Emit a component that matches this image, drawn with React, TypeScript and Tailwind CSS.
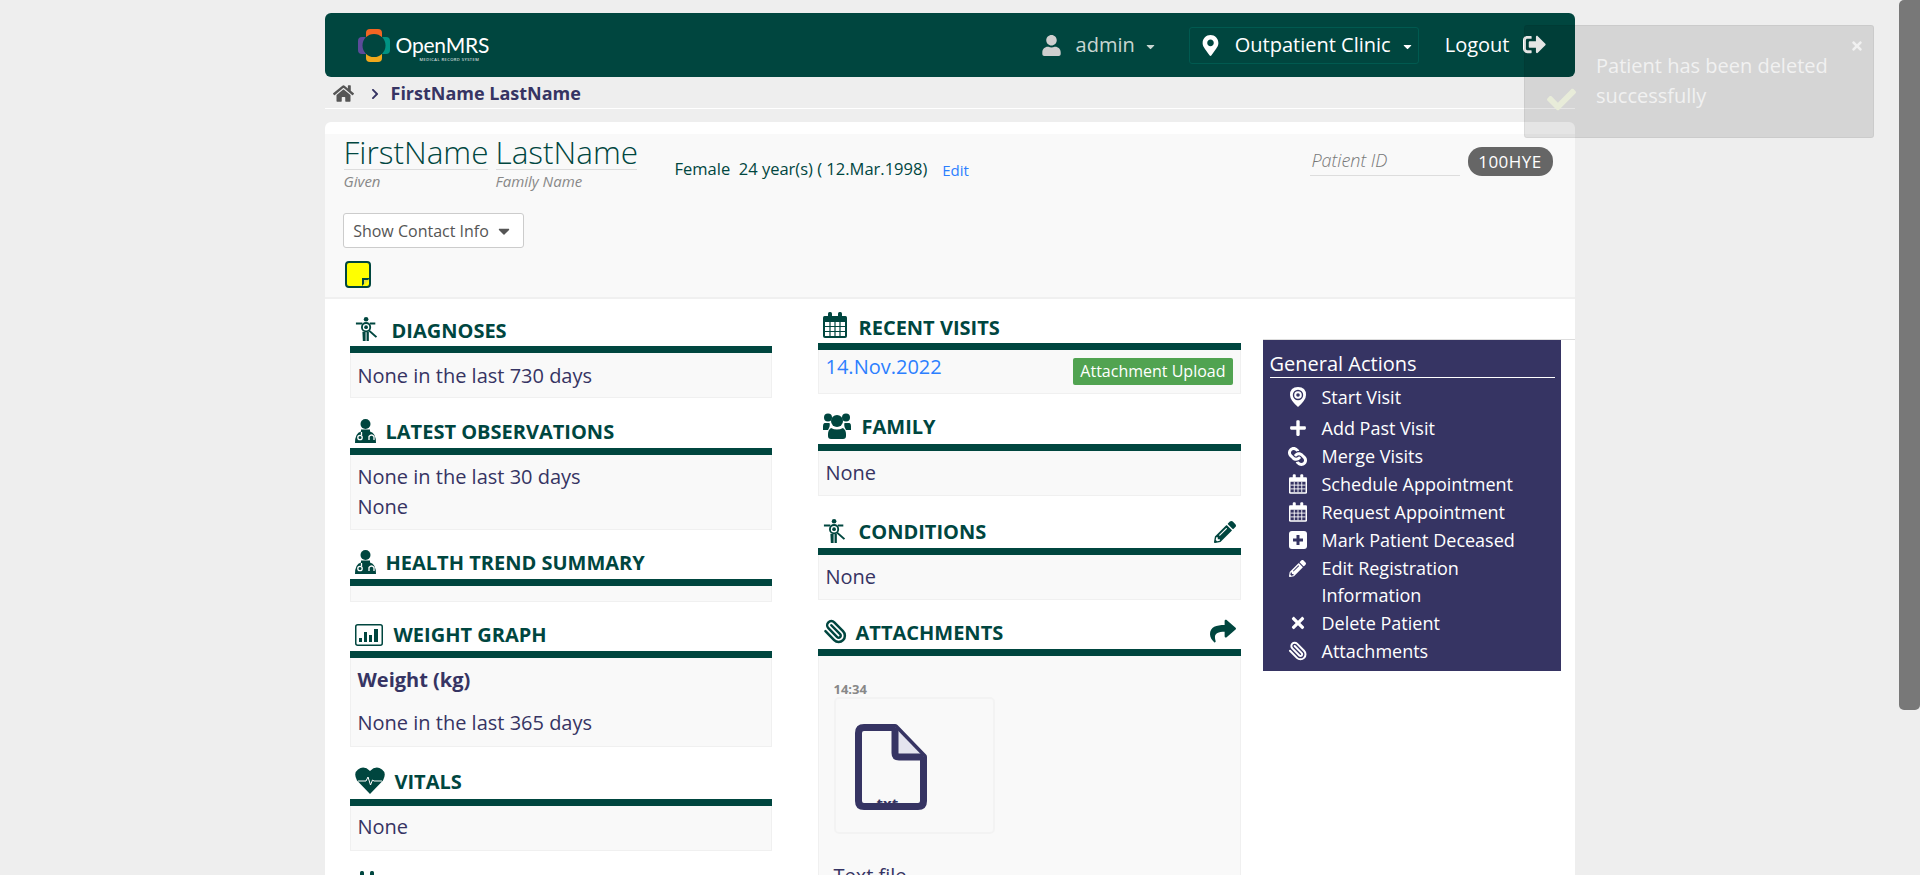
import type { ReactNode } from 'react'
import {
  FaCaretDown, FaCheck, FaChevronRight, FaHome, FaLink, FaMapMarkerAlt,
  FaPencilAlt, FaPlus, FaShare, FaSignOutAlt, FaTimes, FaUser,
} from 'react-icons/fa'
import { Paperclip } from 'lucide-react'

// ─── Drawn icons ─────────────────────────────────────────────

function Logo() {
  return (
    <svg width="32" height="33" viewBox="0 0 32 33" className="shrink-0">
      <rect x="8" y="0" width="16" height="14" rx="4" fill="#f26522" />
      <rect x="8" y="19" width="16" height="14" rx="4" fill="#f0a81c" />
      <rect x="0" y="8" width="14" height="17" rx="4" fill="#5b4b9a" />
      <rect x="18" y="8" width="14" height="17" rx="4" fill="#009384" />
      <circle cx="16" cy="16.5" r="11.5" fill="#00463f" />
    </svg>
  )
}

function BodyIcon({ size = 24 }: { size?: number }) {
  return (
    <svg width={size} height={size} viewBox="0 0 24 26" fill="#00463f">
      <circle cx="11" cy="2.5" r="2.5" />
      <path d="M0 6 H7 V8 H0 Z M15 6 H21 V8 H15 Z" />
      <circle cx="11" cy="11" r="4.5" fill="none" stroke="#00463f" strokeWidth="2" />
      <circle cx="11" cy="11" r="2" />
      <path d="M15 14 L23 21 L21.5 22.5 L13.5 15.5 Z" />
      <path d="M7 16 H10.5 V26 H7.5 Z M11.5 16 H14 V26 H11.5 Z" />
    </svg>
  )
}

function DoctorIcon() {
  return (
    <svg width="21" height="24" viewBox="0 0 21 24" fill="#00463f">
      <circle cx="10.5" cy="5" r="5" />
      <path d="M6 10.5 H15 V12.5 Q21 14 21 24 H0 Q0 14 6 12.5 Z" />
      <circle cx="5" cy="18.5" r="2.2" fill="none" stroke="#fff" strokeWidth="1.3" />
      <path d="M6.5 13 V16 M14 21 V17.5 Q16.5 14.5 19 17.5 V21" fill="none" stroke="#fff" strokeWidth="1.3" />
    </svg>
  )
}

function ChartIcon() {
  return (
    <svg width="28" height="22" viewBox="0 0 28 22">
      <rect x="0.75" y="0.75" width="26.5" height="20.5" rx="2" fill="none" stroke="#00463f" strokeWidth="1.5" />
      <path d="M4 14 H7 V18 H4 Z M9 8 H12 V18 H9 Z M14 11 H17 V18 H14 Z M19 5 H23 V18 H19 Z" fill="#00463f" />
    </svg>
  )
}

function HeartIcon() {
  return (
    <svg width="30" height="27" viewBox="0 0 30 27">
      <path d="M15 27 L2 13.5 Q-2 6 3 2.5 Q9 -2 15 4 Q21 -2 27 2.5 Q32 6 28 13.5 Z" fill="#00463f" />
      <path d="M3 14 H11 L13 10 L15.5 18 L17.5 13 L19 14 H27" fill="none" stroke="#fff" strokeWidth="1" />
    </svg>
  )
}

function UsersIcon() {
  return (
    <svg width="28" height="26" viewBox="0 0 28 26" fill="#00463f">
      <circle cx="5" cy="4.5" r="4" />
      <circle cx="23" cy="4.5" r="4" />
      <circle cx="14" cy="8" r="6" />
      <path d="M1.5 10 H6.5 Q7.5 13 5 17 H0 V13 Q0 10.5 1.5 10 Z" />
      <path d="M21.5 10 H26.5 Q28 10.5 28 13 V17 H23 Q20.5 13 21.5 10 Z" />
      <path d="M8 15 Q14 18 20 15 Q23 17 23 21 V23 Q23 26 20 26 H8 Q5 26 5 23 V21 Q5 17 8 15 Z" />
    </svg>
  )
}

function CalendarIcon({ size = 24, color = '#00463f', inner = '#fff' }: { size?: number; color?: string; inner?: string }) {
  return (
    <svg width={size} height={size + 2} viewBox="0 0 24 26" fill={color}>
      <path d="M1.5 4 H22.5 Q24 4 24 5.5 V24 Q24 26 22 26 H2 Q0 26 0 24 V5.5 Q0 4 1.5 4 Z" />
      <rect x="5" y="0" width="4" height="7" rx="1.5" />
      <rect x="15" y="0" width="4" height="7" rx="1.5" />
      <path d="M2 10 H22 V24 H2 Z" fill={inner} />
      <path d="M7 10 V24 M12 10 V24 M17 10 V24 M2 14.5 H22 M2 19.5 H22" stroke={color} strokeWidth="1.2" />
    </svg>
  )
}

function StartVisitIcon() {
  return (
    <svg width="16" height="20" viewBox="0 0 16 20">
      <path d="M8 0 Q16 0 16 8 Q16 13 8 20 Q0 13 0 8 Q0 0 8 0 Z" fill="#fff" />
      <circle cx="8" cy="8" r="4.5" fill="none" stroke="#363463" strokeWidth="1.4" />
      <circle cx="8" cy="8" r="1.8" fill="#363463" />
    </svg>
  )
}

function PlusBoxIcon() {
  return (
    <svg width="18" height="18" viewBox="0 0 18 18">
      <rect width="18" height="18" rx="3" fill="#fff" />
      <path d="M7.5 4 H10.5 V7.5 H14 V10.5 H10.5 V14 H7.5 V10.5 H4 V7.5 H7.5 Z" fill="#363463" />
    </svg>
  )
}

function StickyIcon() {
  return (
    <svg width="26" height="27" viewBox="0 0 26 27">
      <rect x="1" y="1" width="24" height="25" rx="3" fill="#ff0" stroke="#00463f" strokeWidth="2" />
      <path d="M17 25 V17 H25 Z" fill="#00463f" />
      <path d="M19 24 V19 H24 Z" fill="#e0e040" />
    </svg>
  )
}

function FileIcon() {
  return (
    <div className="relative w-[72px] h-[86px]">
      <svg width="72" height="86" viewBox="0 0 72 86">
        <path
          d="M9 3.5 H40 L68.5 33 V77 Q68.5 82.5 63 82.5 H9 Q3.5 82.5 3.5 77 V9 Q3.5 3.5 9 3.5 Z"
          fill="none" stroke="#363463" strokeWidth="7" strokeLinejoin="round"
        />
        <path d="M40 3.5 V29 Q40 33 44 33 H68.5" fill="#e4e4ee" stroke="#363463" strokeWidth="7" strokeLinejoin="round" />
      </svg>
      <span className="absolute left-[22px] top-[71px] text-[15px] leading-[16px] font-bold text-[#363463]">txt</span>
    </div>
  )
}

// ─── Dashboard section ───────────────────────────────────────

interface SectionProps {
  icon: ReactNode
  title: string
  action?: ReactNode
  head: string
  gap: string
  children?: ReactNode
}

function Section({ icon, title, action, head, gap, children }: SectionProps) {
  return (
    <section>
      <div className={`flex items-end pl-[5px] pr-[5px] pb-[5px] ${head}`}>
        <span className="flex items-end shrink-0">{icon}</span>
        <h2 className={`${gap} text-[20px] leading-[25px] font-bold uppercase text-[#00463f]`}>{title}</h2>
        {action && <span className="ml-auto">{action}</span>}
      </div>
      <div className="h-[7px] bg-[#00463f]" />
      {children && (
        <div className="bg-[#f9f9f9] border border-t-0 border-[#f0f0f0] px-[7px] text-[20px] leading-[30px] text-[#363463]">
          {children}
        </div>
      )}
    </section>
  )
}

const ACTIONS = [
  { label: 'Start Visit', icon: <StartVisitIcon />, row: 'h-[30px]' },
  { label: 'Add Past Visit', icon: <FaPlus size={18} />, row: 'h-[28px] mt-[2px]' },
  { label: 'Merge Visits', icon: <FaLink size={19} className="rotate-90" />, row: 'h-[28px]' },
  { label: 'Schedule Appointment', icon: <CalendarIcon size={18} color="#fff" inner="#363463" />, row: 'h-[28px]' },
  { label: 'Request Appointment', icon: <CalendarIcon size={18} color="#fff" inner="#363463" />, row: 'h-[28px]' },
  { label: 'Mark Patient Deceased', icon: <PlusBoxIcon />, row: 'h-[28px]' },
  { label: 'Edit Registration', icon: <FaPencilAlt size={17} />, row: 'h-[28px]' },
  { label: 'Information', icon: null, row: 'h-[27px]' },
  { label: 'Delete Patient', icon: <FaTimes size={18} />, row: 'h-[28px]' },
  { label: 'Attachments', icon: <Paperclip size={20} strokeWidth={2.4} className="-scale-x-100" />, row: 'h-[28px]' },
]

// ─── Page ────────────────────────────────────────────────────

export default function App() {
  return (
    <div className="relative h-[875px] overflow-hidden bg-[#eeeeee] pr-[21px] font-['Open_Sans',sans-serif]">
      <div className="w-[1250px] mx-auto pt-[13px]">
        {/* Top bar */}
        <header className="h-[64px] bg-[#00463f] rounded-[6px] flex items-center pl-[33px] pr-[29px] text-white">
          <Logo />
          <div className="ml-[6px] relative">
            <div className="font-['Lato',sans-serif] text-[21px] leading-[30px] -tracking-[0.2px]">OpenMRS</div>
            <div className="absolute left-[24px] top-[27px] text-[4px] leading-[6px] tracking-[0.5px] whitespace-nowrap">
              MEDICAL RECORD SYSTEM
            </div>
          </div>
          <FaUser size={21} className="ml-auto text-[#cfcfcf]" />
          <span className="ml-[14px] text-[20px] text-[#c8d6d2]">admin</span>
          <FaCaretDown size={13} className="ml-[9px] mt-[3px] text-[#c8d6d2]" />
          <div className="ml-[32px] w-[230px] h-[37px] border border-[#005a50] rounded-[3px] flex items-center pl-[10px]">
            <FaMapMarkerAlt size={21} />
            <span className="ml-[14px] text-[20px] whitespace-nowrap">Outpatient Clinic</span>
            <FaCaretDown size={13} className="ml-[10px] mt-[3px]" />
          </div>
          <span className="ml-[26px] text-[20px]">Logout</span>
          <FaSignOutAlt size={23} className="ml-[13px] -mt-[2px]" />
        </header>

        {/* Breadcrumb */}
        <nav className="h-[32px] border-b border-white flex items-center pl-[8px] pt-[1px] text-[#363463]">
          <FaHome size={21} className="text-[#555555]" />
          <FaChevronRight size={12} className="ml-[15px] mt-[2px]" />
          <span className="ml-[10px] text-[18px] font-bold">FirstName LastName</span>
        </nav>

        {/* Patient card */}
        <main className="mt-[13px] bg-white rounded-t-[6px] pt-[12px] min-h-[800px]">
          <div className="h-[165px] bg-[#f9f9f9] border-b-2 border-[#f0f0f0] pl-[18px] pr-[22px]">
            <div className="flex items-start">
              <div className="w-[145px] mt-[1px] pl-[1px]">
                <div className="text-[31.5px] leading-[34px] text-[#00463f] border-b border-[#dddddd] font-light whitespace-nowrap">FirstName</div>
                <div className="text-[15px] leading-[22px] italic text-[#888888]">Given</div>
              </div>
              <div className="ml-[7px] w-[142px] mt-[1px] pl-[1px]">
                <div className="text-[31.5px] leading-[34px] text-[#00463f] border-b border-[#dddddd] font-light whitespace-nowrap">LastName</div>
                <div className="text-[15px] leading-[22px] italic text-[#888888]">Family Name</div>
              </div>
              <div className="ml-[38px] mt-[23px] text-[16.5px] leading-[24px] text-[#00463f] whitespace-pre">Female  24 year(s) ( 12.Mar.1998)</div>
              <a className="ml-[15px] mt-[24px] text-[15px] leading-[24px] text-[#2c7fff]">Edit</a>
              <div className="ml-auto mt-[13px] w-[150px] h-[29px] pl-[2px] border-b border-[#dddddd] text-[18px] leading-[26px] italic font-light text-[#777777]">Patient ID</div>
              <span className="ml-[8px] mt-[13px] w-[85px] h-[29px] rounded-[14px] bg-[#666666] text-white text-[17px] leading-[29px] text-center tracking-[0.5px]">100HYE</span>
            </div>
            <button className="mt-[21px] w-[181px] h-[35px] bg-white border border-[#cccccc] rounded-[3px] flex items-center justify-center gap-[6px] text-[16px] text-[#555555]">
              Show Contact Info
              <FaCaretDown size={18} />
            </button>
            <div className="mt-[13px] ml-[2px]"><StickyIcon /></div>
          </div>

          <div className="flex pl-[25px]">
            {/* Left column */}
            <div className="w-[422px]">
              <Section icon={<BodyIcon />} title="Diagnoses" gap="ml-[13px] -mb-[2px]" head="h-[47px]">
                <div className="h-[44px] pt-[8px]">None in the last 730 days</div>
              </Section>
              <Section icon={<DoctorIcon />} title="Latest Observations" gap="ml-[10px] -mb-[1px]" head="h-[50px]">
                <div className="h-[74px] pt-[7px]">
                  <div>None in the last 30 days</div>
                  <div>None</div>
                </div>
              </Section>
              <Section icon={<DoctorIcon />} title="Health Trend Summary" gap="ml-[10px] -mb-[1px]" head="h-[49px]">
                <div className="h-[15px]" />
              </Section>
              <Section icon={<ChartIcon />} title="Weight Graph" gap="ml-[11px] -mb-[1px]" head="h-[49px]">
                <div className="h-[88px]">
                  <div className="pt-[7px] font-bold">Weight (kg)</div>
                  <div className="pt-[13px]">None in the last 365 days</div>
                </div>
              </Section>
              <Section icon={<HeartIcon />} title="Vitals" gap="ml-[10px]" head="h-[52px]">
                <div className="h-[44px] pt-[6px]">None</div>
              </Section>
              <div className="mt-[20px] pl-[5px] pr-[5px] flex justify-between">
                <CalendarIcon />
                <FaPencilAlt size={22} className="mt-[4px] text-[#00463f]" />
              </div>
            </div>

            {/* Middle column */}
            <div className="ml-[46px] w-[423px]">
              <Section icon={<CalendarIcon />} title="Recent Visits" gap="ml-[12px] -mb-[2px]" head="h-[44px]">
                <div className="h-[43px] flex items-start justify-between -mr-[3px]">
                  <a className="text-[#2c7fff] pt-[2px]">14.Nov.2022</a>
                  <span className="mt-[8px] mr-[3px] bg-[#51a351] rounded-[2px] text-white text-[16px] leading-[27px] px-[7px]">Attachment Upload</span>
                </div>
              </Section>
              <Section icon={<UsersIcon />} title="Family" gap="ml-[11px]" head="h-[50px]">
                <div className="h-[44px] pt-[7px]">None</div>
              </Section>
              <Section
                icon={<BodyIcon />}
                title="Conditions"
                gap="ml-[12px] -mb-[1px]"
                head="h-[52px]"
                action={<FaPencilAlt size={22} color="#00463f" className="block" />}
              >
                <div className="h-[44px] pt-[7px]">None</div>
              </Section>
              <Section
                icon={<Paperclip size={25} color="#00463f" strokeWidth={2.4} className="-scale-x-100" />}
                title="Attachments"
                gap="ml-[8px] -mb-[1px]"
                head="h-[49px]"
                action={<FaShare size={26} color="#00463f" className="block" />}
              >
                <div className="h-[240px] pl-[8px] pt-[26px]">
                  <div className="text-[13px] leading-[14px] font-bold text-[#888888]">14:34</div>
                  <div className="mt-[1px] w-[161px] h-[137px] border-2 border-[#f3f3f3] rounded-[5px] pl-[19px] pt-[25px]">
                    <FileIcon />
                  </div>
                  <div className="mt-[27px]">Text file</div>
                </div>
              </Section>
            </div>

            {/* General actions */}
            <div className="ml-[22px] flex-1 mt-[40px] border-t border-[#dddddd] self-start">
              <aside className="w-[298px] h-[331px] bg-[#363463] text-white pl-[7px] pr-[6px] pt-[10px]">
                <h3 className="h-[28px] border-b border-white text-[20px] leading-[27px]">General Actions</h3>
                <ul className="mt-[4px]">
                  {ACTIONS.map(a => (
                    <li key={a.label} className={`flex items-center text-[18px] ${a.row}`}>
                      <span className="w-[52px] pl-[4px] flex justify-center shrink-0 text-white">{a.icon}</span>
                      {a.label}
                    </li>
                  ))}
                </ul>
              </aside>
            </div>
          </div>
        </main>
      </div>

      {/* Toast over the page */}
      <div className="absolute left-[1524px] top-[25px] w-[350px] h-[113px] rounded-[3px] border border-black/5 bg-black/10 text-[#f1f1f1]">
        <FaCheck size={29} className="absolute left-[22px] top-[59px] text-[#e8ecd9]" />
        <FaTimes size={14} className="absolute right-[9px] top-[13px]" />
        <div className="pl-[71px] pr-[20px] pt-[25px] text-[20px] leading-[30px]">Patient has been deleted successfully</div>
      </div>

      {/* Scrollbar */}
      <div className="absolute right-0 top-0 w-[21px] h-[710px] bg-[#787878] rounded-l-[5px] rounded-b-[5px]" />
    </div>
  )
}
